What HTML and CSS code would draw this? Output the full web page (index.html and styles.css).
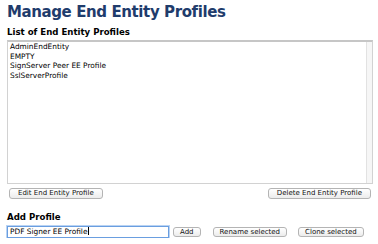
FILE: index.html
```html
<!DOCTYPE html>
<html lang="en">
<head>
  <meta charset="UTF-8" />
  <meta name="viewport" content="width=device-width, initial-scale=1.0" />
  <title>Manage End Entity Profiles</title>
  <link rel="stylesheet" href="styles.css">
</head>
<body>
  <div class="page">
    <h1 class="page-title">Manage End Entity Profiles</h1>

    <h2 class="section-title">List of End Entity Profiles</h2>
    <div class="profile-list">
      <div class="list-items">
        <div class="list-item">AdminEndEntity</div>
        <div class="list-item">EMPTY</div>
        <div class="list-item">SignServer Peer EE Profile</div>
        <div class="list-item">SslServerProfile</div>
      </div>
      <div class="list-scroll"></div>
    </div>

    <div class="list-actions">
      <button class="btn btn-wide">Edit End Entity Profile</button>
      <button class="btn btn-wide">Delete End Entity Profile</button>
    </div>

    <h2 class="section-title add-title">Add Profile</h2>
    <div class="add-row">
      <div class="text-field">PDF Signer EE Profile<span class="caret"></span></div>
      <button class="btn btn-add">Add</button>
      <button class="btn btn-rename">Rename selected</button>
      <button class="btn btn-clone">Clone selected</button>
    </div>
  </div>
</body>
</html>
```

FILE: styles.css
```css
body {
  margin: 0;
  background-color: #fff;
  color: #000;
  font-family: "DejaVu Sans", Verdana, sans-serif;
}
.page {
  padding: 0 5px 0 7px;
}
.page-title {
  margin: 3px 0 0;
  font-size: 15px;
  line-height: 18px;
  font-weight: bold;
  letter-spacing: -0.4px;
  color: #1f3c6c;
}
.section-title {
  margin: 6px 0 3px;
  font-size: 8.6px;
  line-height: 10px;
  font-weight: bold;
}
.profile-list {
  display: flex;
  height: 141px;
  border: 1px solid #d2d2d2;
  border-top: 2px solid #c6c6c6;
}
.list-items {
  flex: 1;
  padding: 0 2px;
}
.list-item {
  font-size: 7.4px;
  line-height: 9.7px;
  white-space: nowrap;
}
.list-scroll {
  width: 5px;
  background-color: #f6f6f6;
  border-left: 1px solid #e2e2e2;
}
.list-actions {
  display: flex;
  justify-content: space-between;
  margin: 4px 2px 0;
}
.btn {
  height: 11px;
  padding: 0 6px;
  margin: 0;
  border: 1px solid #b4b4b4;
  border-radius: 3px;
  background: linear-gradient(#ffffff, #ececec);
  font-family: "DejaVu Sans", Verdana, sans-serif;
  font-size: 7px;
  line-height: 9px;
  color: #111;
}
.btn-wide {
  padding: 0 8px;
}
.add-title {
  margin: 13px 0 4px;
}
.add-row {
  display: flex;
  align-items: center;
}
.text-field {
  box-sizing: border-box;
  width: 162px;
  height: 12px;
  padding: 0 2px;
  border: 1px solid #6a9ee0;
  box-shadow: 0 0 0 1px #b9d3f3;
  font-size: 7.4px;
  line-height: 10px;
  white-space: nowrap;
}
.caret {
  display: inline-block;
  width: 1px;
  height: 8px;
  margin-left: 1px;
  vertical-align: -1px;
  background-color: #000;
}
.btn-add {
  height: 10px;
  margin-left: 4px;
}
.btn-rename {
  height: 10px;
  margin-left: 12px;
}
.btn-clone {
  height: 10px;
  margin-left: 11px;
}
```
